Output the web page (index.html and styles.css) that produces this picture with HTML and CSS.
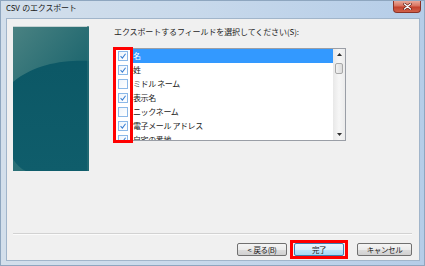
FILE: index.html
```
<!DOCTYPE html>
<html lang="ja">
<head>
<meta charset="utf-8">
<title>CSV のエクスポート</title>
<link rel="stylesheet" href="styles.css">
</head>
<body>
<div class="window">
  <div class="titlebar">
    <span class="title">CSV のエクスポート</span>
    <span class="close">
      <svg width="9" height="7" viewBox="0 0 9 7">
        <path d="M1.5 1 L7.5 6 M7.5 1 L1.5 6" stroke="#5a1a12" stroke-width="2.6" stroke-linecap="round"/>
        <path d="M1.5 1 L7.5 6 M7.5 1 L1.5 6" stroke="#ffffff" stroke-width="1.4" stroke-linecap="round"/>
      </svg>
    </span>
  </div>
  <div class="client">
    <div class="main">
      <div class="banner">
        <svg width="76" height="145" viewBox="0 0 76 145">
          <defs>
            <linearGradient id="gTop" x1="0" y1="0" x2="1" y2="0.6">
              <stop offset="0" stop-color="#4a8282"/>
              <stop offset="1" stop-color="#1f676f"/>
            </linearGradient>
            <linearGradient id="gBase" x1="0" y1="0" x2="0" y2="1">
              <stop offset="0" stop-color="#0b5664"/>
              <stop offset="1" stop-color="#0f5d6b"/>
            </linearGradient>
          </defs>
          <rect width="76" height="145" fill="url(#gBase)"/>
          <path d="M0 0 H76 V35 C50 34 22 38 0 56 Z" fill="url(#gTop)"/>
          <path d="M0 133 C4 139 8 143 13 145 L0 145 Z" fill="#2a7077"/>
          <rect x="0" y="0" width="76" height="1" fill="#c6d2d3"/>
          <rect x="74" y="0" width="2" height="145" fill="#2b6f76" opacity="0.6"/>
        </svg>
      </div>
      <div class="fields">
        <div class="prompt">エクスポートするフィールドを選択してください(S):</div>
        <div class="listbox">
          <ul class="items">
            <li class="item selected"><span class="cb"><svg viewBox="0 0 10 10"><path d="M2 5.2 L4.2 7.6 L8.2 2.2" stroke="#3a7fd2" stroke-width="1.3" fill="none"/></svg></span><span class="label">名</span></li>
            <li class="item"><span class="cb"><svg viewBox="0 0 10 10"><path d="M2 5.2 L4.2 7.6 L8.2 2.2" stroke="#3a7fd2" stroke-width="1.3" fill="none"/></svg></span><span class="label">姓</span></li>
            <li class="item"><span class="cb"></span><span class="label">ミドル ネーム</span></li>
            <li class="item"><span class="cb"><svg viewBox="0 0 10 10"><path d="M2 5.2 L4.2 7.6 L8.2 2.2" stroke="#3a7fd2" stroke-width="1.3" fill="none"/></svg></span><span class="label">表示名</span></li>
            <li class="item"><span class="cb"></span><span class="label">ニックネーム</span></li>
            <li class="item"><span class="cb"><svg viewBox="0 0 10 10"><path d="M2 5.2 L4.2 7.6 L8.2 2.2" stroke="#3a7fd2" stroke-width="1.3" fill="none"/></svg></span><span class="label">電子メール アドレス</span></li>
            <li class="item"><span class="cb"><svg viewBox="0 0 10 10"><path d="M2 5.2 L4.2 7.6 L8.2 2.2" stroke="#3a7fd2" stroke-width="1.3" fill="none"/></svg></span><span class="label">自宅の番地</span></li>
          </ul>
          <div class="scrollbar">
            <div class="arrow">
              <svg width="5" height="3" viewBox="0 0 5 3"><path d="M0 3 L2.5 0 L5 3 Z" fill="#303030"/></svg>
            </div>
            <div class="thumb"></div>
            <div class="track"></div>
            <div class="arrow">
              <svg width="5" height="3" viewBox="0 0 5 3"><path d="M0 0 L2.5 3 L5 0 Z" fill="#303030"/></svg>
            </div>
          </div>
          <div class="mark mark-list"></div>
        </div>
      </div>
    </div>
    <div class="separator"></div>
    <div class="buttons">
      <button class="btn">&lt; 戻る(B)</button>
      <button class="btn default">完了<span class="mark mark-btn"></span></button>
      <button class="btn cancel">キャンセル</button>
    </div>
  </div>
</div>
</body>
</html>
```
FILE: styles.css
```
* { box-sizing: border-box; }

html, body {
  margin: 0;
  padding: 0;
  background: #ffffff;
}

body {
  width: 425px;
  height: 266px;
  overflow: hidden;
  font-family: "Noto Sans CJK JP", "Noto Sans", sans-serif;
  color: #000;
}

.window {
  width: 425px;
  height: 266px;
  display: flex;
  flex-direction: column;
  border: 1px solid #8ea6bf;
  padding: 0 4px 4px 5px;
  background: linear-gradient(90deg, #d3dfeb 0%, #c8d9eb 45%, #b5cde8 100%);
}

.titlebar {
  height: 17px;
  display: flex;
  align-items: flex-start;
  flex: none;
}

.title {
  font-size: 8px;
  line-height: 11px;
  padding-top: 1px;
  letter-spacing: -0.2px;
  word-spacing: 1px;
  color: #1a1a1a;
}

.close {
  margin-left: auto;
  margin-right: -1px;
  width: 28px;
  height: 12px;
  display: flex;
  align-items: center;
  justify-content: center;
  border: 1px solid #8b3226;
  border-top: none;
  border-radius: 0 0 4px 4px;
  background: linear-gradient(180deg, #e9a99a 0%, #d8725e 45%, #c4412c 55%, #d0614a 100%);
}

.client {
  flex: 1;
  display: flex;
  flex-direction: column;
  background: #f0f0f0;
  border: 1px solid #a1b5ca;
  padding: 7px 7px 4px 6px;
}

.main {
  display: flex;
  gap: 25px;
  align-items: flex-start;
}

.banner {
  width: 76px;
  height: 145px;
  flex: none;
}

.banner svg { display: block; }

.fields {
  display: flex;
  flex-direction: column;
}

.prompt {
  font-size: 8px;
  line-height: 12px;
  letter-spacing: -0.1px;
  color: #1e1e1e;
}

.listbox {
  position: relative;
  margin-top: 10px;
  width: 232px;
  height: 93px;
  border: 1px solid #9a9ea6;
  background: #ffffff;
  display: flex;
}

.items {
  list-style: none;
  margin: 0;
  padding: 0;
  flex: 1;
  overflow: hidden;
}

.item {
  height: 14px;
  display: flex;
  align-items: center;
  padding-left: 3px;
}

.cb {
  width: 10px;
  height: 10px;
  flex: none;
  border: 1px solid #8bb8e8;
  background: linear-gradient(135deg, #eef5fc, #ffffff);
  display: flex;
}

.cb svg {
  width: 8px;
  height: 8px;
}

.label {
  flex: 1;
  margin-left: 3px;
  height: 14px;
  padding-left: 2px;
  font-size: 8px;
  line-height: 14px;
  letter-spacing: -0.4px;
  color: #1a1a1a;
  white-space: nowrap;
}

.selected .label {
  background: #3399ff;
  color: #ffffff;
}

.scrollbar {
  width: 12px;
  flex: none;
  display: flex;
  flex-direction: column;
  background: linear-gradient(90deg, #e8e8e8, #f6f6f6 50%, #ececec);
}

.arrow {
  height: 11px;
  display: flex;
  align-items: center;
  justify-content: center;
}

.thumb {
  margin: 3px 2px 0 2px;
  height: 11px;
  border: 1px solid #a8a8a8;
  border-radius: 2px;
  background: linear-gradient(90deg, #f2f2f2, #dcdcdc);
}

.track { flex: 1; }

.mark {
  position: absolute;
  border: 3px solid #ff0000;
  pointer-events: none;
}

.mark-list {
  left: -2px;
  top: -2px;
  width: 20px;
  height: 96px;
}

.separator {
  margin-top: auto;
  height: 2px;
  border-top: 1px solid #d2d2d2;
  border-bottom: 1px solid #fbfbfb;
}

.buttons {
  margin-top: 8px;
  display: flex;
  justify-content: flex-end;
  gap: 7px;
}

.btn {
  position: relative;
  width: 50px;
  height: 13px;
  padding: 0;
  border: 1px solid #707070;
  border-radius: 2px;
  background: linear-gradient(180deg, #f4f4f4 0%, #ebebeb 50%, #dddddd 51%, #d0d0d0 100%);
  font-family: "Noto Sans CJK JP", "Noto Sans", sans-serif;
  font-size: 7.5px;
  line-height: 11px;
  letter-spacing: -0.4px;
  word-spacing: 1px;
  color: #1a1a1a;
}

.btn.default {
  border-color: #3c7fb1;
  background: linear-gradient(180deg, #eaf6fd 0%, #d9f0fc 50%, #bee6fd 51%, #a7d9f5 100%);
}

.btn.cancel {
  width: 55px;
  margin-left: 6px;
}

.mark-btn {
  left: -5px;
  top: -4px;
  width: 58px;
  height: 19px;
}
```
